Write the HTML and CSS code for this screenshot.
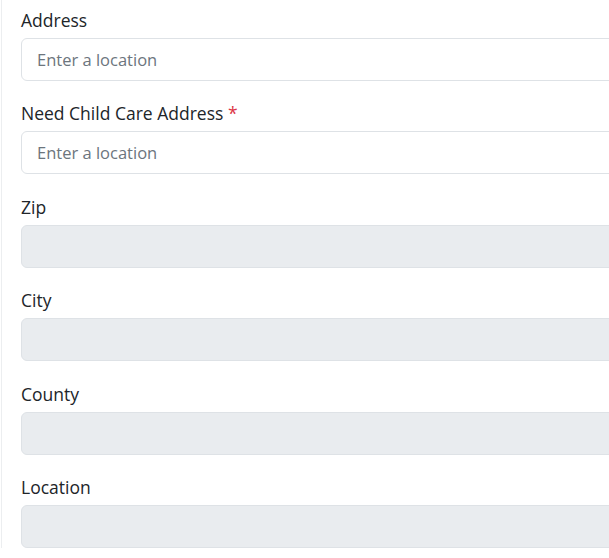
FILE: index.html
```html
<!DOCTYPE html>
<html>
<head>
<meta charset="utf-8">
<link rel="stylesheet" href="styles.css">
</head>
<body>
<div class="panel">
  <form class="form">
    <div class="group">
      <label class="label">Address</label>
      <input class="control" type="text" placeholder="Enter a location">
    </div>
    <div class="group">
      <label class="label">Need Child Care Address <span class="req">*</span></label>
      <input class="control" type="text" placeholder="Enter a location">
    </div>
    <div class="group">
      <label class="label">Zip</label>
      <input class="control" type="text" disabled>
    </div>
    <div class="group">
      <label class="label">City</label>
      <input class="control" type="text" disabled>
    </div>
    <div class="group">
      <label class="label">County</label>
      <input class="control" type="text" disabled>
    </div>
    <div class="group">
      <label class="label">Location</label>
      <input class="control" type="text" disabled>
    </div>
  </form>
</div>
</body>
</html>
```

FILE: styles.css
```css
html, body {
  margin: 0;
  padding: 0;
  background: #fff;
  overflow: hidden;
}
body {
  font-family: "Open Sans", "Noto Sans", sans-serif;
  color: #212529;
}
.panel {
  margin-left: 1px;
  border-left: 1px solid #eceef0;
  padding: 5px 0 0 19px;
  width: 589px;
  overflow: hidden;
}
.form {
  display: flex;
  flex-direction: column;
  gap: 17.4px;
  width: 700px;
}
.group {
  display: flex;
  flex-direction: column;
}
.label {
  font-size: 17.5px;
  line-height: 26px;
  padding-top: 2px;
  margin-bottom: 5px;
  color: #212529;
}
.req {
  color: #dc3545;
}
.control {
  box-sizing: border-box;
  height: 43px;
  width: 100%;
  padding: 0 15px;
  border: 1px solid #dee2e6;
  border-radius: 6px;
  font-family: inherit;
  font-size: 16.5px;
  color: #212529;
  background: #fff;
  outline: none;
}
.control::placeholder {
  color: #6c757d;
}
.control:disabled {
  background: #e9ecef;
}
```
